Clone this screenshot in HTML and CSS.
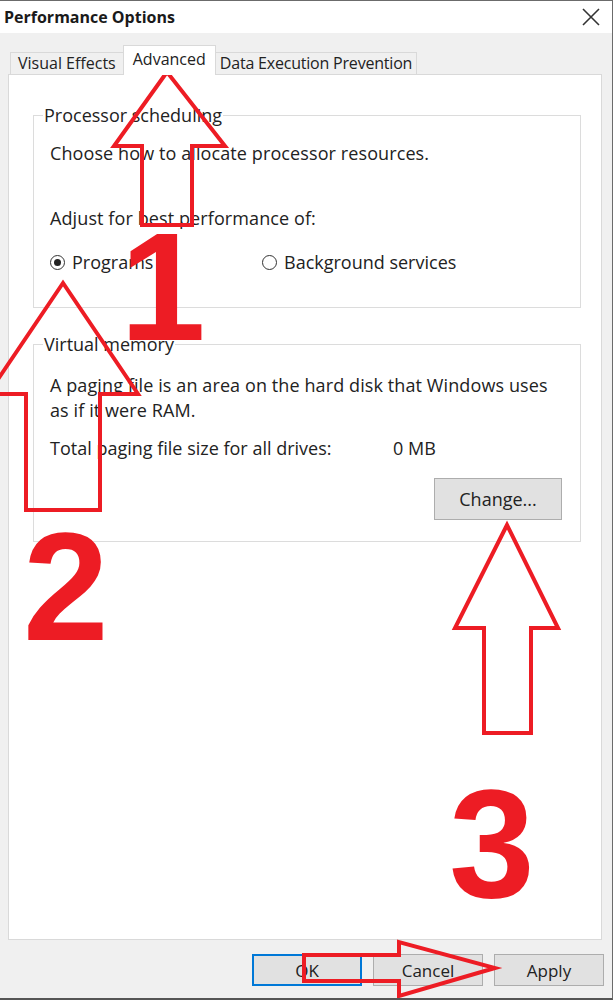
FILE: index.html
```html
<!DOCTYPE html>
<html lang="en">
<head>
  <meta charset="UTF-8">
  <title>Performance Options</title>
  <link rel="stylesheet" href="styles.css">
</head>
<body>
  <div class="window">
    <div class="titlebar">
      <span class="title">Performance Options</span>
      <svg class="close" width="18" height="18" viewBox="0 0 18 18">
        <path d="M1 1 L17 17 M17 1 L1 17" stroke="#333" stroke-width="1.6" fill="none"/>
      </svg>
    </div>

    <div class="content">
      <div class="tabs">
        <div class="tab">Visual Effects</div>
        <div class="tab active">Advanced</div>
        <div class="tab">Data Execution Prevention</div>
      </div>

      <div class="panel">
        <fieldset class="group proc">
          <legend>Processor scheduling</legend>
          <p class="line first">Choose how to allocate processor resources.</p>
          <p class="line adjust">Adjust for best performance of:</p>
          <div class="radios">
            <label class="radio"><span class="dot checked"></span>Programs</label>
            <label class="radio bg"><span class="dot"></span>Background services</label>
          </div>
        </fieldset>

        <fieldset class="group vm">
          <legend>Virtual memory</legend>
          <p class="line first">A paging file is an area on the hard disk that Windows uses<br>as if it were RAM.</p>
          <div class="total">
            <span class="total-label">Total paging file size for all drives:</span>
            <span>0 MB</span>
          </div>
          <div class="change-row">
            <button class="btn change">Change...</button>
          </div>
        </fieldset>
      </div>

      <div class="buttons">
        <button class="btn default">OK</button>
        <button class="btn">Cancel</button>
        <button class="btn">Apply</button>
      </div>
    </div>

    <!-- red tutorial marks drawn over the dialog -->
    <svg class="marks" width="615" height="1001" viewBox="0 0 615 1001">
      <g fill="none" stroke="#ed1c24" stroke-width="4" stroke-linejoin="miter">
        <polygon points="167,72 114,146 142,146 142,225 192,225 192,146 225,146"/>
        <polygon points="63,283 -12,394 26,394 26,510 100,510 100,394 138,394"/>
        <polygon points="507,525 455,628 484,628 484,733 531,733 531,628 558,628"/>
        <polygon points="304,955 399,955 399,942 495,968 399,996 399,981 304,981"/>
      </g>
    </svg>
    <span class="num n1">1</span>
    <span class="num n2">2</span>
    <span class="num n3">3</span>
  </div>
</body>
</html>
```

FILE: styles.css
```css
* {
  box-sizing: border-box;
}
body {
  margin: 0;
  background-color: #ffffff;
  font-family: "Open Sans", "Noto Sans", sans-serif;
  color: #222222;
}
.window {
  position: relative;
  width: 613px;
  height: 1000px;
  background-color: #f0f0f0;
  border-top: 1px solid #6b6b6b;
  border-right: 1px solid #6b6b6b;
  border-bottom: 2px solid #555555;
  overflow: hidden;
}
.titlebar {
  height: 32px;
  background-color: #ffffff;
  display: flex;
  align-items: center;
  justify-content: space-between;
  padding: 0 12px 0 4px;
}
.title {
  font-size: 16px;
  font-weight: bold;
  color: #1a1a1a;
}
.content {
  padding: 12px 10px 0 8px;
}
.tabs {
  display: flex;
  align-items: flex-end;
  height: 29px;
  padding-left: 2px;
  position: relative;
  z-index: 1;
}
.tab {
  height: 22px;
  line-height: 21px;
  padding: 0 7px;
  font-size: 16px;
  background-color: #f0f0f0;
  border: 1px solid #d9d9d9;
  border-bottom: none;
}
.tab:last-child {
  padding: 0 4px;
  letter-spacing: -0.2px;
}
.tab.active {
  height: 30px;
  line-height: 27px;
  margin: 0 -1px -1px;
  padding: 0 9px;
  background-color: #ffffff;
}
.panel {
  height: 866px;
  background-color: #ffffff;
  border: 1px solid #d9d9d9;
  padding: 30px 20px 0 24px;
}
.group {
  margin: 0;
  border: 1px solid #dcdcdc;
  padding: 0 18px 0 16px;
  font-size: 18px;
}
.group legend {
  margin-left: -7px;
  padding: 0 1px;
  line-height: 20px;
}
.line {
  margin: 0;
  line-height: 25px;
  letter-spacing: 0.1px;
}
.proc .first {
  margin-top: 16px;
}
.proc .adjust {
  margin-top: 40px;
}
.radios {
  display: flex;
  margin-top: 19px;
  padding-bottom: 33px;
  line-height: 24px;
}
.radio {
  display: flex;
  align-items: center;
  gap: 7px;
  width: 212px;
}
.dot {
  width: 15px;
  height: 15px;
  border: 1px solid #333333;
  border-radius: 50%;
  display: flex;
  align-items: center;
  justify-content: center;
}
.dot.checked::after {
  content: "";
  width: 7px;
  height: 7px;
  border-radius: 50%;
  background-color: #222222;
}
.vm {
  margin-top: 26px;
}
.vm .first {
  margin-top: 19px;
}
.total {
  display: flex;
  margin-top: 13px;
  line-height: 24px;
}
.total-label {
  width: 343px;
}
.change-row {
  display: flex;
  justify-content: flex-end;
  margin-top: 18px;
  padding-bottom: 21px;
}
.btn {
  font-family: inherit;
  font-size: 17px;
  color: #222222;
  background-color: #e1e1e1;
  border: 1px solid #adadad;
  padding: 0;
}
.change {
  width: 128px;
  height: 42px;
  font-size: 18px;
}
.buttons {
  display: flex;
  justify-content: flex-end;
  gap: 11px;
  margin: 14px -2px 0 0;
}
.buttons .btn {
  width: 110px;
  height: 32px;
}
.buttons .default {
  border: 2px solid #0078d7;
}
.marks {
  position: absolute;
  left: 0;
  top: -1px;
}
.num {
  position: absolute;
  font-family: "Liberation Sans", Arial, sans-serif;
  font-weight: bold;
  font-size: 154px;
  line-height: 1;
  color: #ed1c24;
}
.n1 {
  left: 120px;
  top: 209px;
}
.n2 {
  left: 23px;
  top: 509px;
}
.n3 {
  left: 449px;
  top: 766px;
}
```
